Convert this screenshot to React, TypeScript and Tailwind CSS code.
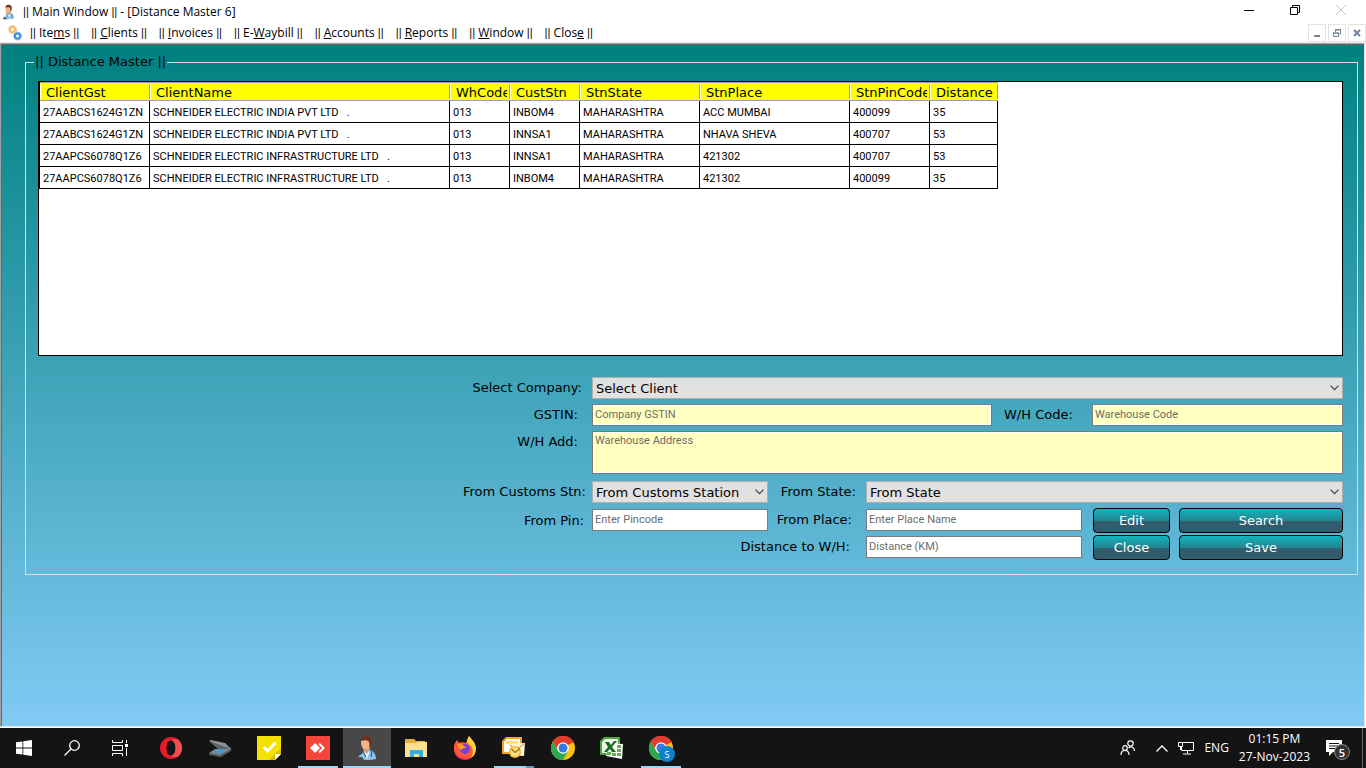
import type { ReactNode } from "react";

const menu: [string, string, string][] = [
  ["Ite", "m", "s"],
  ["", "C", "lients"],
  ["", "I", "nvoices"],
  ["E-", "W", "aybill"],
  ["", "A", "ccounts"],
  ["", "R", "eports"],
  ["", "W", "indow"],
  ["Clos", "e", ""],
];

const columns = [
  { name: "ClientGst", width: "w-[110px]" },
  { name: "ClientName", width: "w-[300px]" },
  { name: "WhCode", width: "w-[60px]" },
  { name: "CustStn", width: "w-[70px]" },
  { name: "StnState", width: "w-[120px]" },
  { name: "StnPlace", width: "w-[150px]" },
  { name: "StnPinCode", width: "w-[80px]" },
  { name: "Distance", width: "w-[68px]" },
];

const rows = [
  ["27AABCS1624G1ZN", "SCHNEIDER ELECTRIC INDIA PVT LTD   .", "013", "INBOM4", "MAHARASHTRA", "ACC MUMBAI", "400099", "35"],
  ["27AABCS1624G1ZN", "SCHNEIDER ELECTRIC INDIA PVT LTD   .", "013", "INNSA1", "MAHARASHTRA", "NHAVA SHEVA", "400707", "53"],
  ["27AAPCS6078Q1Z6", "SCHNEIDER ELECTRIC INFRASTRUCTURE LTD   .", "013", "INNSA1", "MAHARASHTRA", "421302", "400707", "53"],
  ["27AAPCS6078Q1Z6", "SCHNEIDER ELECTRIC INFRASTRUCTURE LTD   .", "013", "INBOM4", "MAHARASHTRA", "421302", "400099", "35"],
];

function Bars() {
  return <span className="font-['Roboto',sans-serif]">||</span>;
}

function Doctor({ className }: { className: string }) {
  return (
    <svg viewBox="0 0 20 24" className={className} aria-hidden="true">
      <path d="M1 23c0-3 2-4 4-5l2-4h6c4 1 6 5 6 9-6 1.500-12 1-18 0z" fill="#8fc4ea" />
      <path d="M6 13l3 5 4-5v-3H6z" fill="#d99873" />
      <path d="M6 14l4 9 3-9-3 4z" fill="#f3f8fc" />
      <ellipse cx="8.500" cy="7" rx="4.500" ry="6.200" fill="#f0b48b" />
      <path d="M4 5c0-3 2-5 5.500-5C13 0 15 2 14.500 6c0 3-1 5-2 6 0-3 0-5-1-7-2-1-5-1-7.500 0z" fill="#6b331d" />
      <path d="M6 14c0 3 2 4 3 7M13 14c2 1 2 4 1 7" fill="none" stroke="#2866a3" strokeWidth="1.200" />
      <path d="M0 21h5l2 3H1z" fill="#4d4d4d" />
    </svg>
  );
}

function Gears() {
  return (
    <svg viewBox="0 0 14 16" className="h-4 w-3.5" fill="none" aria-hidden="true">
      <circle cx="4.500" cy="4.500" r="2.600" stroke="#f3bd68" strokeWidth="2" />
      <circle cx="4.500" cy="4.500" r="4" stroke="#e9a53c" strokeWidth="1" strokeDasharray="1.500 1.300" />
      <circle cx="9.500" cy="11" r="2.600" stroke="#3d8fe0" strokeWidth="2.200" />
      <circle cx="9.500" cy="11" r="4" stroke="#5fa8ec" strokeWidth="1" strokeDasharray="1.500 1.300" />
    </svg>
  );
}

function Select({ id, label, className }: { id: string; label: string; className: string }) {
  return (
    <div className={`relative h-[22px] ${className}`}>
      <select id={id} className="block h-full w-full appearance-none border border-[#adadad] bg-[#e1e1e1] pt-px pl-[3px] text-[13px] leading-5 text-black">
        <option>{label}</option>
      </select>
      <svg viewBox="0 0 9 6" className="pointer-events-none absolute top-2 right-1 h-1.5 w-[9px]" fill="none" stroke="#444" strokeWidth="1.200" aria-hidden="true">
        <path d="M.5 .7l4 4 4-4" />
      </svg>
    </div>
  );
}

const field =
  "block resize-none border border-[#7a7a7a] px-0.5 font-['Roboto',Arial,sans-serif] text-[11px] leading-4 placeholder:text-[#6d6d6d]";
const yellow = "bg-[#ffffc0] shadow-[inset_0_0_0_1px_#fff]";

function Action({ children }: { children: ReactNode }) {
  return (
    <button
      type="button"
      className="h-[25px] rounded border border-black bg-linear-to-b/srgb from-[#14b4bc] from-0% via-[#238592] via-50% to-[#305c6d] to-55% text-[13px] leading-5 text-white"
    >
      {children}
    </button>
  );
}

function Chrome() {
  return (
    <svg viewBox="0 0 24 24" className="size-6" aria-hidden="true">
      <circle cx="12" cy="12" r="12" fill="#fbc116" />
      <path d="M12 12L1.600 6A12 12 0 0 1 22.400 6z" fill="#e33b2e" />
      <path d="M12 6.500H22.700A12 12 0 0 0 1.600 6l4 6z" fill="#e33b2e" />
      <path d="M1.600 6A12 12 0 0 0 12 24l5-9-9.500 0z" fill="#2da94f" />
      <circle cx="12" cy="12" r="5.800" fill="#fff" />
      <circle cx="12" cy="12" r="4.500" fill="#3b78e7" />
    </svg>
  );
}

const apps: { name: string; icon: ReactNode; state?: "running" | "active" | "grouped" }[] = [
  {
    name: "Opera",
    icon: (
      <svg viewBox="0 0 22 22" className="size-[22px]" aria-hidden="true">
        <path fillRule="evenodd" d="M11 0a11 11 0 1 0 0 22 11 11 0 0 0 0-22zm0 3.500c3 0 4.500 3.500 4.500 7.500s-1.500 7.500-4.500 7.500S6.500 15 6.500 11 8 3.500 11 3.500z" fill="#e8192c" />
        <path d="M11 3.500c2-1.800 5-2 7-1a11 11 0 0 1 0 17c-2 1-5 .8-7-1 3 0 4.500-3.500 4.500-7.500S14 3.500 11 3.500z" fill="#f2504d" />
      </svg>
    ),
  },
  {
    name: "Scanner",
    icon: (
      <svg viewBox="0 0 24 17" className="h-[17px] w-6" aria-hidden="true">
        <path d="M1 1l15 3 8 5-11 3z" fill="#5f6366" />
        <path d="M1 1l2-1 14 3 6 6z" fill="#8d9194" />
        <path d="M1 13l6-4 16 0-8 6-3 2z" fill="#85898c" />
        <path d="M6 12l5-3h7l-6 5z" fill="#3b9bd8" />
        <path d="M1 13l11 2 11-6v2l-10 6L1 15z" fill="#55595c" />
      </svg>
    ),
  },
  {
    name: "Tasks",
    icon: (
      <svg viewBox="0 0 24 24" className="size-6" aria-hidden="true">
        <path d="M0 0h24v18l-6 6H0z" fill="#f5e100" />
        <path d="M24 12v6h-6v6h-6z" fill="#d2bf05" />
        <path d="M18 24v-6h6z" fill="#fff" />
        <path d="M6.500 11l4 4 8-8.500" fill="none" stroke="#fff" strokeWidth="2.800" />
      </svg>
    ),
  },
  {
    name: "AnyDesk",
    state: "running",
    icon: (
      <svg viewBox="0 0 24 24" className="size-6" aria-hidden="true">
        <path d="M0 0h24v24H0z" fill="#f9443b" />
        <path d="M4 12l5-5 5 5-5 5z" fill="#fff" />
        <path d="M13 7.500l4.500 4.500-4.500 4.500" fill="none" stroke="#fff" strokeWidth="2" />
      </svg>
    ),
  },
  { name: "Main Window", state: "active", icon: <Doctor className="h-6 w-5" /> },
  {
    name: "File Explorer",
    icon: (
      <svg viewBox="0 0 22 18" className="h-[18px] w-[22px]" aria-hidden="true">
        <path d="M0 0h9l2 2h9v4H0z" fill="#e8ae35" />
        <path d="M0 4l11 0 2-1h9v15H0z" fill="#fde08d" />
        <path d="M5 18v-7h13v7h-4v-3H9v3z" fill="#31aee8" />
      </svg>
    ),
  },
  {
    name: "Firefox",
    icon: (
      <svg viewBox="0 0 24 24" className="size-6" aria-hidden="true">
        <path d="M2 7l2-3 2 3c2-1 5-1 6 0l3-3 1-4 4 5c5 6 3 14-2 17-8 4-17 0-17-9 0-3 0-4 1-6z" fill="#ff5a36" />
        <path d="M14 4l2-4 4 5c5 6 3 14-2 17 3-5 2-10-1-13-2-1-3-3-3-5z" fill="#ffd738" />
        <path d="M2 13c1 9 11 12 17 8-4 5-17 4-17-8z" fill="#ec1785" />
        <circle cx="12" cy="13" r="5" fill="#7542dc" />
        <path d="M4 8c3-1 5 0 7 2 2 0 2 1 1 2-2 0-3 1-3 2-3-1-4-3-5-6z" fill="#ff9b25" />
      </svg>
    ),
  },
  {
    name: "Outlook",
    state: "grouped",
    icon: (
      <svg viewBox="0 0 24 22" className="h-[22px] w-6" aria-hidden="true">
        <path d="M4 0h16v17H0V4z" fill="#f4a525" />
        <path d="M5 2h13v13H2V5z" fill="#fff" />
        <path d="M4 4h12v3H4z" fill="#ffd989" />
        <path d="M7 7l16-1-1 13-14-1z" fill="#fff4d4" />
        <path d="M8 8l6 5 8-6" fill="none" stroke="#c98c25" strokeWidth="1" />
        <circle cx="13" cy="15" r="6" fill="#f4b72c" />
        <circle cx="13" cy="15" r="4.500" fill="#ffe28b" />
        <path d="M9.500 12l3.500 3.500 5-4" fill="none" stroke="#a66c12" strokeWidth="1.300" />
      </svg>
    ),
  },
  { name: "Chrome", icon: <Chrome /> },
  {
    name: "Excel",
    icon: (
      <svg viewBox="0 0 24 22" className="h-[22px] w-6" aria-hidden="true">
        <path d="M4 0h16v18H0V4z" fill="#4da43c" />
        <path d="M5 2h13v14H2V5z" fill="#eef8e8" />
        <path d="M10 6l13 1-1 15-16-3z" fill="#fff" />
        <path d="M17 8h4v3h-4zM17 12h4v3h-4zM17 16h4v3h-4zM12 16h4v3h-4zM7 15h4v3H7z" fill="#67ad55" />
        <path d="M5 5h4l2 3 3-4h3l-5 6 4 5h-4l-2-3-3 3H4l4-5z" fill="#176b22" />
      </svg>
    ),
  },
  {
    name: "Chrome profile",
    state: "running",
    icon: (
      <span className="relative block">
        <Chrome />
        <span className="absolute top-2.5 left-2.5 grid size-4 place-items-center rounded-full bg-[#0c82cc] text-[9px] leading-none text-white">S</span>
      </span>
    ),
  },
];

function Taskbar() {
  return (
    <footer className="flex h-10 shrink-0 items-stretch justify-between bg-[#141414] font-['Open_Sans','Noto_Sans',sans-serif] text-white">
      <div className="flex">
        <button type="button" aria-label="Start" className="grid w-12 place-items-center">
          <svg viewBox="0 0 16 16" className="size-4" fill="#fff" aria-hidden="true">
            <path d="M0 2.300l6.500-.9v6.200H0zM7.300 1.200L16 0v7.600H7.300zM0 8.400h6.500v6.200L0 13.700zM7.300 8.400H16V16l-8.700-1.200z" />
          </svg>
        </button>
        <button type="button" aria-label="Search" className="grid w-12 place-items-center">
          <svg viewBox="0 0 16 16" className="size-4" fill="none" stroke="#fff" strokeWidth="1.300" aria-hidden="true">
            <circle cx="10.500" cy="5.500" r="4.800" />
            <path d="M7 9L.5 15.500" />
          </svg>
        </button>
        <button type="button" aria-label="Task view" className="mr-[3px] grid w-12 place-items-center">
          <svg viewBox="0 0 16 16" className="size-4" fill="none" stroke="#fff" aria-hidden="true">
            <path d="M.5 0v2.500h10V0M.5 16v-2.500h10V16M.5 5.500h10v5H.5zM14.500 0v3M14.500 8v8" />
            <path d="M13 4h3v3h-3z" fill="#fff" stroke="none" />
          </svg>
        </button>
        <div className="flex gap-px">
          {apps.map((app) => (
            <button
              key={app.name}
              type="button"
              aria-label={app.name}
              className={`relative grid w-12 place-items-center ${app.state === "active" ? "bg-[#484848]" : ""}`}
            >
              {app.icon}
              {app.state === "active" && <span className="absolute inset-x-0 bottom-0 h-0.5 bg-[#99d8f7]" />}
              {app.state === "running" && <span className="absolute inset-x-1 bottom-0 h-0.5 bg-[#99d8f7]" />}
              {app.state === "grouped" && <span className="absolute inset-x-1 bottom-0 h-0.5 border-r-8 border-[#6b93a8] bg-[#99d8f7]" />}
            </button>
          ))}
        </div>
      </div>
      <div className="flex items-center">
        <button type="button" aria-label="People" className="mr-5">
          <svg viewBox="0 0 16 16" className="size-4" fill="none" stroke="#fff" strokeWidth="1.200" aria-hidden="true">
            <circle cx="10.500" cy="3.500" r="2.700" />
            <circle cx="5" cy="8" r="2.300" />
            <path d="M1 15c0-6 8-6 8 0M8.500 8c3-2.500 6-.5 6 3" />
          </svg>
        </button>
        <button type="button" aria-label="Show hidden icons" className="mr-2.5">
          <svg viewBox="0 0 12 7" className="h-[7px] w-3" fill="none" stroke="#fff" strokeWidth="1.300" aria-hidden="true">
            <path d="M.5 6.500L6 1l5.500 5.500" />
          </svg>
        </button>
        <button type="button" aria-label="Network" className="mr-2.5">
          <svg viewBox="0 0 16 14" className="h-3.5 w-4" fill="none" stroke="#fff" aria-hidden="true">
            <path d="M5 1.500h10.500v8H3.500V6M9.500 9.500v3M5 13h8M.5 1.500h4v4h-4zM2.500 5.500V9" />
          </svg>
        </button>
        <span className="mr-2.5 text-[12px] leading-4">ENG</span>
        <time className="mr-4 text-center text-[12px] leading-[18px]">
          01:15 PM
          <br />
          27-Nov-2023
        </time>
        <button type="button" aria-label="Notifications" className="relative mr-3 h-6 w-6">
          <svg viewBox="0 0 16 16" className="size-4" aria-hidden="true">
            <path d="M0 0h16v12H7l-4 4v-4H0z" fill="#fff" />
            <path d="M3 3.500h10M3 6h10M3 8.500h6" stroke="#141414" />
          </svg>
          <span className="absolute right-0 bottom-0 grid size-4 place-items-center rounded-full border border-[#8a8a8a] bg-[#333] text-[11px] leading-none font-semibold">5</span>
        </button>
        <span className="h-full w-1 border-l border-[#666]" />
      </div>
    </footer>
  );
}

export default function App() {
  return (
    <div className="flex min-h-screen flex-col bg-white font-['DejaVu_Sans',Verdana,sans-serif] text-black">
      <header className="shrink-0 font-['Open_Sans','Noto_Sans',sans-serif] text-[12px] leading-4">
        <div className="flex h-6 items-center justify-between pr-5 pl-[3px]">
          <div className="flex items-center gap-2">
            <Doctor className="h-4 w-3" />
            <h1>
              <Bars /> Main Window <Bars /> - [Distance Master 6]
            </h1>
          </div>
          <div className="-mt-1 flex items-center gap-9">
            <button type="button" aria-label="Minimize">
              <svg viewBox="0 0 10 10" className="size-2.5" stroke="#000" aria-hidden="true">
                <path d="M0 5.500h10" />
              </svg>
            </button>
            <button type="button" aria-label="Restore">
              <svg viewBox="0 0 10 10" className="size-2.5" fill="none" stroke="#000" aria-hidden="true">
                <path d="M.5 2.500h7v7h-7zM2.500 2.500v-2h7v7h-2" />
              </svg>
            </button>
            <button type="button" aria-label="Close window">
              <svg viewBox="0 0 10 10" className="size-2.5" stroke="#c4c4c4" aria-hidden="true">
                <path d="M0 0l10 10M10 0L0 10" />
              </svg>
            </button>
          </div>
        </div>
        <div className="flex h-[19px] items-center justify-between border-b border-[#f0f0f0] pl-2">
          <nav className="flex items-center gap-3">
            <span className="-mr-1">
              <Gears />
            </span>
            {menu.map(([before, key, after]) => (
              <button key={before + key + after} type="button" className="whitespace-nowrap">
                <Bars /> {before}
                <span className="underline">{key}</span>
                {after} <Bars />
              </button>
            ))}
          </nav>
          <div className="flex gap-0.5 text-[#748599]">
            <button type="button" aria-label="Minimize child" className="grid h-[18px] w-[18px] place-items-center border border-[#e3e3e3]">
              <svg viewBox="0 0 8 8" className="size-2" stroke="currentColor" strokeWidth="2" aria-hidden="true">
                <path d="M1 7h6" />
              </svg>
            </button>
            <button type="button" aria-label="Restore child" className="grid h-[18px] w-[18px] place-items-center border border-[#e3e3e3]">
              <svg viewBox="0 0 8 8" className="size-2" fill="none" stroke="currentColor" aria-hidden="true">
                <path d="M.5 4h5v3.500h-5zM2.500 3V.5h5V5H6M2 1h6M0 4h6" />
              </svg>
            </button>
            <button type="button" aria-label="Close child" className="grid h-[18px] w-[18px] place-items-center border border-[#e3e3e3]">
              <svg viewBox="0 0 8 8" className="size-2" stroke="currentColor" strokeWidth="2.200" aria-hidden="true">
                <path d="M1 1l6 6M7 1L1 7" />
              </svg>
            </button>
          </div>
        </div>
      </header>

      <div className="mr-px mb-px flex flex-1 flex-col border-t border-r border-b border-l border-t-[#a0a0a0] border-r-[#e3e3e3] border-b-[#e3e3e3] border-l-[#a0a0a0]">
        <main className="flex-1 border-t border-l border-[#696969] bg-linear-to-b/srgb from-[#008080] to-[#81caf4] pt-2 pr-1.5 pl-[23px]">
          <fieldset className="border border-[#dcdcdc] pr-3.5 pb-3.5 pl-3">
            <legend className="-ml-1 px-px text-[13px] leading-[18px]">|| Distance Master ||</legend>
            <div className="mt-2.5 h-[275px] overflow-auto border border-black bg-white">
              <table className="w-[959px] table-fixed border-separate border-spacing-0 border-l border-black text-left">
                <thead>
                  <tr>
                    {columns.map((c) => (
                      <th key={c.name} scope="col" className={`${c.width} h-[19px] overflow-hidden border-t border-b border-[#a0a0a0] bg-[#ffff00] p-0 text-[13px] leading-4 font-normal`}>
                        <span className="block h-3.5 border-r border-l border-r-[#a0a0a0] border-l-white pr-0.5 pl-[5px]">
                          <span className="block h-4 overflow-hidden whitespace-nowrap">{c.name}</span>
                        </span>
                      </th>
                    ))}
                  </tr>
                </thead>
                <tbody className="font-['Roboto',Arial,sans-serif] text-[11px] leading-4">
                  {rows.map((r, i) => (
                    <tr key={i}>
                      {r.map((v, j) => (
                        <td key={j} className="h-[22px] overflow-hidden border-r border-b border-black p-0 pt-0.5 pl-[3px] whitespace-pre">
                          {v}
                        </td>
                      ))}
                    </tr>
                  ))}
                </tbody>
              </table>
            </div>

            <form className="mt-[21px] grid grid-cols-[554px_1fr] text-[13px] leading-[22px]">
              <label htmlFor="company" className="pr-2.5 text-right">Select Company:</label>
              <Select id="company" label="Select Client" className="w-full" />

              <label htmlFor="gstin" className="mt-[5px] pr-3.5 text-right">GSTIN:</label>
              <div className="mt-[5px] flex">
                <input id="gstin" placeholder="Company GSTIN" className={`${field} ${yellow} h-[22px] w-[400px] pb-0.5`} />
                <label htmlFor="whcode" className="w-[100px] pl-3">W/H Code:</label>
                <input id="whcode" placeholder="Warehouse Code" className={`${field} ${yellow} h-[22px] min-w-0 flex-1 pb-0.5`} />
              </div>

              <label htmlFor="address" className="mt-[5px] pr-3.5 text-right">W/H Add:</label>
              <textarea id="address" placeholder="Warehouse Address" className={`${field} ${yellow} mt-[5px] h-[43px] w-full pt-px`} />

              <label htmlFor="station" className="mt-[7px] pr-1.5 text-right">From Customs Stn:</label>
              <div className="mt-[7px] flex">
                <Select id="station" label="From Customs Station" className="w-[176px]" />
                <label htmlFor="state" className="w-[98px] pr-2.5 text-right">From State:</label>
                <Select id="state" label="From State" className="flex-1" />
              </div>

              <label htmlFor="pin" className="mt-[7px] pr-2 text-right">From Pin:</label>
              <div className="mt-[5px] flex">
                <div className="grid grid-cols-[176px_98px_216px] content-start gap-y-[5px] pt-px">
                  <input id="pin" placeholder="Enter Pincode" className={`${field} h-[22px] w-full bg-white pb-0.5`} />
                  <label htmlFor="place" className="pr-3.5 text-right">From Place:</label>
                  <input id="place" placeholder="Enter Place Name" className={`${field} h-[22px] w-full bg-white pb-0.5`} />
                  <label htmlFor="distance" className="col-span-2 pr-4 text-right">Distance to W/H:</label>
                  <input id="distance" placeholder="Distance (KM)" className={`${field} h-[22px] w-full bg-white pb-0.5`} />
                </div>
                <div className="ml-[11px] grid flex-1 grid-cols-[77px_1fr] gap-x-[9px] gap-y-0.5">
                  <Action>Edit</Action>
                  <Action>Search</Action>
                  <Action>Close</Action>
                  <Action>Save</Action>
                </div>
              </div>
            </form>
          </fieldset>
        </main>
      </div>
      <Taskbar />
    </div>
  );
}
